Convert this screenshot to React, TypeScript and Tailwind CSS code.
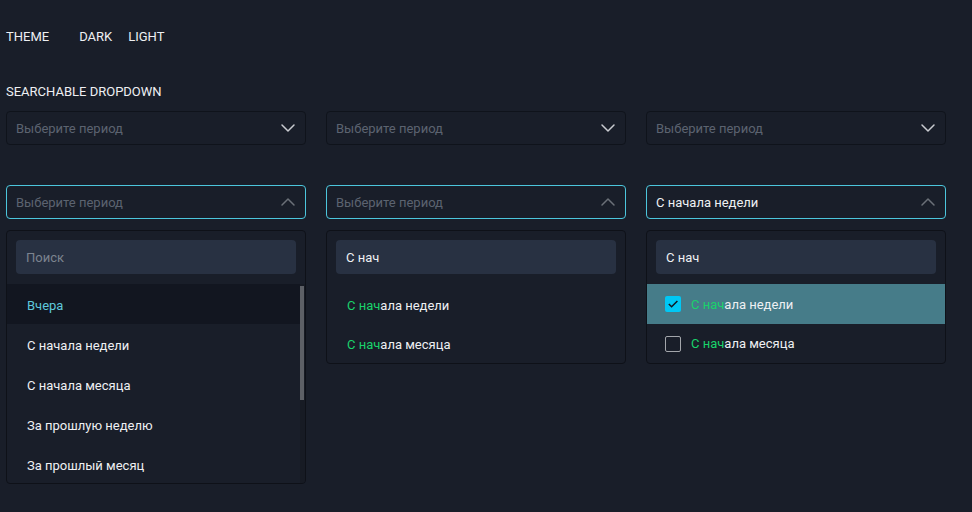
import React from "react";

const font = { fontFamily: "Roboto, 'Noto Sans', sans-serif" };

function Chevron({ up, dim }: { up?: boolean; dim?: boolean }) {
  return (
    <svg width="16" height="10" viewBox="0 0 16 10" className={dim ? "text-[#6b7078]" : "text-[#c9cbd0]"}>
      <path
        d={up ? "M2 8 L8 2 L14 8" : "M2 2 L8 8 L14 2"}
        fill="none"
        stroke="currentColor"
        strokeWidth="1.5"
        strokeLinecap="round"
        strokeLinejoin="round"
      />
    </svg>
  );
}

function Select({ value, open }: { value?: string; open?: boolean }) {
  return (
    <div
      className={
        "flex h-[34px] items-center justify-between rounded-[4px] border pl-[9px] pr-[9px] text-[13px] " +
        (open ? "border-[#4cc6dc]" : "border-[#0f131b]")
      }
    >
      <span className={"pt-[1px] " + (value ? "text-[#eef0f3]" : "text-[#5c6370]")}>{value ?? "Выберите период"}</span>
      <Chevron up={open} dim={open} />
    </div>
  );
}

function Hl({ text }: { text: string }) {
  return (
    <span>
      <span className="text-[#19d36b]">{text.slice(0, 5)}</span>
      <span className="text-[#eef0f3]">{text.slice(5)}</span>
    </span>
  );
}

function Panel({ children }: { children: React.ReactNode }) {
  return <div className="mt-[11px] overflow-hidden rounded-[4px] border border-[#0e1118] bg-[#191e29]">{children}</div>;
}

function Search({ value }: { value?: string }) {
  return (
    <div className="px-[9px] pt-[9px] pb-[10px]">
      <div className="flex h-[34px] items-center rounded-[4px] bg-[#283142] px-[10px] text-[13px]">
        <span className={"pt-[1px] " + (value ? "text-[#eef0f3]" : "text-[#7c838f]")}>{value ?? "Поиск"}</span>
      </div>
    </div>
  );
}

function Checkbox({ checked }: { checked?: boolean }) {
  if (checked)
    return (
      <div className="flex h-[16px] w-[16px] items-center justify-center rounded-[2px] bg-[#00c8f5]">
        <svg width="12" height="10" viewBox="0 0 12 10">
          <path d="M1.8 5 L4.6 7.8 L10.4 2" fill="none" stroke="#111722" strokeWidth="1.5" />
        </svg>
      </div>
    );
  return <div className="h-[16px] w-[16px] rounded-[2px] border border-[#a3a6ab]" />;
}

export default function App() {
  const items = ["С начала недели", "С начала месяца", "За прошлую неделю", "За прошлый месяц"];
  return (
    <div style={font} className="min-h-screen bg-[#191e29] px-[6px] pt-[29px] text-[#eef0f3]">
      <div className="flex text-[13px] leading-[15px]">
        <span>THEME</span>
        <span className="ml-[30px]">DARK</span>
        <span className="ml-[16px]">LIGHT</span>
      </div>
      <div className="mt-[40px] text-[13px] leading-[15px]">SEARCHABLE DROPDOWN</div>

      <div className="mt-[12px] grid grid-cols-[300px_300px_300px] gap-x-[20px]">
        <Select />
        <Select />
        <Select />
      </div>

      <div className="mt-[40px] grid grid-cols-[300px_300px_300px] items-start gap-x-[20px]">
        <div>
          <Select open />
          <Panel>
            <Search />
            <div className="relative h-[199px] overflow-hidden text-[13px]">
              <div className="flex h-[40px] items-center bg-[#121620] pl-[20px] pt-[3px] text-[#5fc8dc]">Вчера</div>
              {items.map((t) => (
                <div key={t} className="flex h-[40px] shrink-0 items-center pl-[20px] pt-[3px]">
                  {t}
                </div>
              ))}
              <div className="absolute right-0 top-0 h-full w-[5px] bg-[#171b24]">
                <div className="mt-[2px] h-[114px] w-[4px] bg-[#5d6066]" />
              </div>
            </div>
          </Panel>
        </div>

        <div>
          <Select open />
          <Panel>
            <Search value="С нач" />
            <div className="text-[13px]">
              <div className="flex h-[40px] items-center pl-[20px] pt-[3px]">
                <Hl text="С начала недели" />
              </div>
              <div className="flex h-[39px] items-center pl-[20px] pt-[3px]">
                <Hl text="С начала месяца" />
              </div>
            </div>
          </Panel>
        </div>

        <div>
          <Select open value="С начала недели" />
          <Panel>
            <Search value="С нач" />
            <div className="text-[13px]">
              <div className="flex h-[40px] items-center gap-[10px] bg-[#467c89] pl-[18px]">
                <Checkbox checked />
                <span className="pt-[1px]">
                  <Hl text="С начала недели" />
                </span>
              </div>
              <div className="flex h-[39px] items-center gap-[10px] pl-[18px]">
                <Checkbox />
                <span className="pt-[1px]">
                  <Hl text="С начала месяца" />
                </span>
              </div>
            </div>
          </Panel>
        </div>
      </div>
    </div>
  );
}
